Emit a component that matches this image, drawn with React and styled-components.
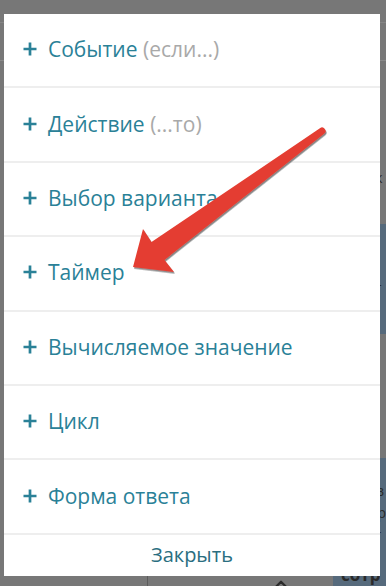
import styled, { createGlobalStyle } from "styled-components";
import { ChevronUp } from "lucide-react";

const items = [
	{ label: "Событие", hint: "(если...)" },
	{ label: "Действие", hint: "(...то)" },
	{ label: "Выбор варианта" },
	{ label: "Таймер" },
	{ label: "Вычисляемое значение" },
	{ label: "Цикл" },
	{ label: "Форма ответа" },
];

export default function App() {
	return (
		<Screen>
			<GlobalStyle />
			<Page>
				<TopBar />
				<Toolbar />
				<Content>
					<MainColumn>
						<BottomBar>
							<span />
							<BottomCell>
								<ChevronUp size={18} strokeWidth={3} color="#2b2b2b" />
							</BottomCell>
						</BottomBar>
					</MainColumn>
					<SideColumn>
						<SideText $top={106}>Поиск</SideText>
						<SideGap $height={35} />
						<SideBlock $height={110}>
							<SideText $top={53}>Отчёт</SideText>
						</SideBlock>
						<SideGap $height={124} />
						<SideBlock $grow>
							<SideText $top={22}>Отзыв</SideText>
							<SideText>Выбор</SideText>
							<SideText>Ответ</SideText>
							<SideText $top={18} $bold>
								сотр
							</SideText>
						</SideBlock>
					</SideColumn>
				</Content>
			</Page>

			<Sheet>
				{items.map((item) => (
					<Row key={item.label}>
						<PlusIcon />
						<Label>
							{item.label}
							{item.hint && <Hint> {item.hint}</Hint>}
						</Label>
					</Row>
				))}
				<CloseButton>Закрыть</CloseButton>
			</Sheet>

			<Arrow />
		</Screen>
	);
}

function PlusIcon() {
	return (
		<svg width="16" height="16" viewBox="0 0 16 16">
			<path d="M8 1.5v13M1.5 8h13" stroke="#2a8197" strokeWidth="2.7" fill="none" />
		</svg>
	);
}

function Arrow() {
	return (
		<ArrowLayer viewBox="0 0 386 586" width="386" height="586">
			<defs>
				<filter id="arrowShadow" x="-10%" y="-10%" width="120%" height="120%">
					<feDropShadow dx="1" dy="1.6" stdDeviation="0.7" floodColor="#333" floodOpacity="0.6" />
				</filter>
			</defs>
			<path
				d="M319.9 128.2 L151.5 242.1 L143 229 L133 267 L174 272 L164.5 259.9 L324.1 133.8 A3.5 3.5 0 0 0 319.9 128.2 Z"
				fill="#e43e31"
				filter="url(#arrowShadow)"
			/>
		</ArrowLayer>
	);
}

const GlobalStyle = createGlobalStyle`
	* {
		box-sizing: border-box;
	}
	body {
		margin: 0;
		font-family: "Open Sans", "Noto Sans", sans-serif;
		background: #777777;
	}
`;

const Screen = styled.div`
	position: relative;
	width: 386px;
	height: 586px;
	overflow: hidden;
	background-color: #777777;
`;

const Page = styled.div`
	height: 100%;
	display: flex;
	flex-direction: column;
`;

const TopBar = styled.div`
	height: 27px;
	border-bottom: 1px solid #858585;
`;

const Toolbar = styled.div`
	height: 45px;
	border-bottom: 1px solid #8a8a8a;
`;

const Content = styled.div`
	flex: 1;
	display: grid;
	grid-template-columns: 333px 53px;
`;

const MainColumn = styled.div`
	display: flex;
	flex-direction: column;
	justify-content: flex-end;
`;

const BottomBar = styled.div`
	height: 14px;
	display: grid;
	grid-template-columns: 147px 1fr;
`;

const BottomCell = styled.div`
	border-left: 1px solid #5c5c5c;
	padding-left: 124px;
	padding-top: 3px;
`;

const SideColumn = styled.div`
	display: flex;
	flex-direction: column;
	overflow: hidden;
`;

const SideBlock = styled.div`
	display: flex;
	flex-direction: column;
	background-color: #566a7c;
	height: ${(p) => (p.$height ? `${p.$height}px` : "auto")};
	flex: ${(p) => (p.$grow ? 1 : "none")};
`;

const SideGap = styled.div`
	flex: none;
	height: ${(p) => p.$height}px;
`;

const SideText = styled.div`
	padding-left: 8px;
	margin-top: ${(p) => p.$top || 0}px;
	white-space: nowrap;
	font-size: ${(p) => (p.$bold ? 17 : 14)}px;
	line-height: 22px;
	font-weight: ${(p) => (p.$bold ? 700 : 400)};
	color: #2a2a2a;
`;

const Sheet = styled.div`
	position: absolute;
	left: 4px;
	top: 14px;
	width: 376px;
	height: 562px;
	background-color: #ffffff;
	display: flex;
	flex-direction: column;
`;

const Row = styled.div`
	height: 74.4px;
	flex: none;
	display: flex;
	align-items: center;
	gap: 10px;
	padding-left: 18px;
	padding-bottom: 2px;
	border-bottom: 2px solid #eeeeee;
	svg {
		flex: none;
	}
`;

const Label = styled.span`
	font-size: 21px;
	line-height: 28px;
	color: #2a8197;
	white-space: nowrap;
`;

const Hint = styled.span`
	color: #a9a9a9;
`;

const CloseButton = styled.div`
	flex: 1;
	display: flex;
	align-items: center;
	justify-content: center;
	padding-bottom: 2px;
	font-size: 20px;
	color: #2a6e80;
`;

const ArrowLayer = styled.svg`
	position: absolute;
	left: 0;
	top: 0;
	pointer-events: none;
`;
